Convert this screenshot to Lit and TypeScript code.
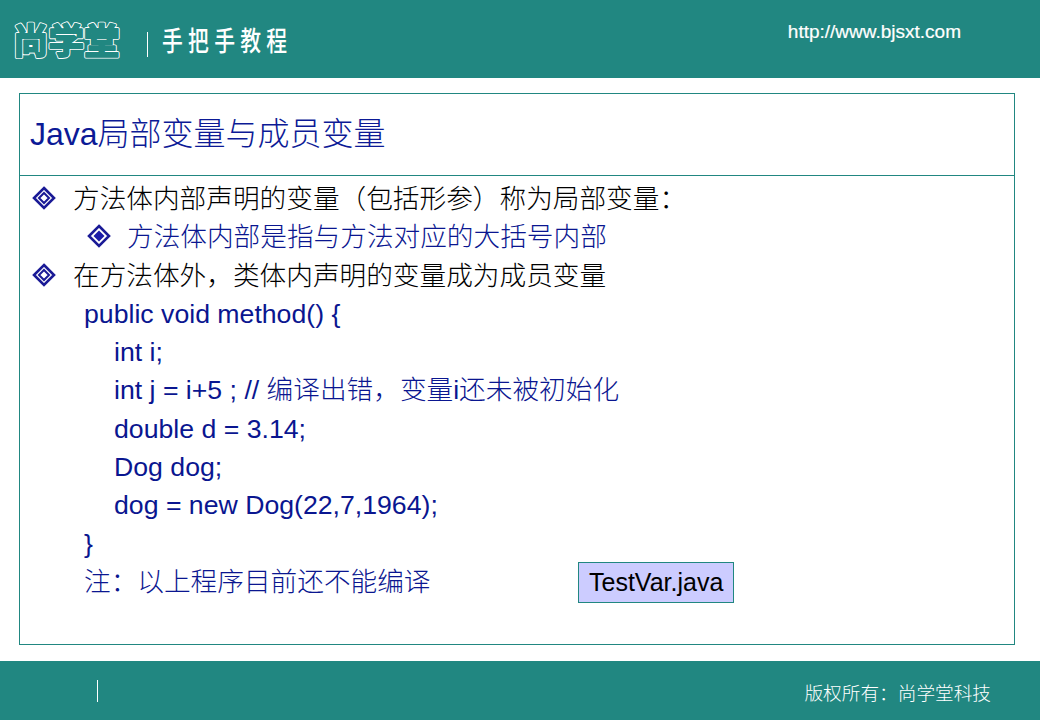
import { LitElement, html, css } from "lit";
import { customElement } from "lit/decorators.js";

const outerDiamond = html`<svg class="dia" width="24" height="24" viewBox="0 0 24 24">
  <path d="M12 2 L22 12 L12 22 L2 12 Z" fill="none" stroke="#1a1a96" stroke-width="2.6"/>
  <path d="M12 7 L17 12 L12 17 L7 12 Z" fill="none" stroke="#1a1a96" stroke-width="2"/>
</svg>`;
const innerDiamond = html`<svg class="dia" width="24" height="24" viewBox="0 0 24 24">
  <path d="M12 2 L22 12 L12 22 L2 12 Z" fill="none" stroke="#1a1a96" stroke-width="2.6"/>
  <path d="M12 6.5 L17.5 12 L12 17.5 L6.5 12 Z" fill="#1a1aa8"/>
</svg>`;

@customElement("app-root")
export class AppRoot extends LitElement {
  static styles = css`
    :host {
      display: flex;
      flex-direction: column;
      width: 1040px;
      height: 720px;
      background: #fff;
      font-family: "Liberation Sans", "Noto Sans CJK SC", sans-serif;
      font-weight: 300;
      overflow: hidden;
    }
    .top {
      height: 78px;
      flex: none;
      background: #218781;
      color: #fff;
      display: flex;
      align-items: center;
      padding: 0 79px 0 10px;
    }
    .logo {
      display: block;
      flex: none;
    }
    .logo-text {
      font-family: "Noto Sans CJK SC", sans-serif;
      font-weight: 700;
      font-size: 35.5px;
      fill: #218781;
      stroke-linejoin: round;
      stroke-linecap: round;
    }
    .halo {
      stroke: #fff;
      stroke-width: 3.8;
    }
    .core {
      stroke: #218781;
      stroke-width: 2;
    }
    .sep {
      width: 1px;
      background: #fff;
      flex: none;
    }
    .top .sep {
      height: 25px;
      margin: 11px 14px 0 21px;
    }
    .course {
      font-family: "Noto Sans CJK SC", sans-serif;
      font-size: 26px;
      font-weight: 500;
      letter-spacing: 6.6px;
      line-height: 30px;
      white-space: nowrap;
      transform: scale(0.8, 1.05);
      transform-origin: left center;
    }
    .url {
      margin-left: auto;
      align-self: flex-start;
      margin-top: 20px;
      font-size: 19px;
      line-height: 24px;
      font-weight: 400;
      -webkit-text-stroke: 0.2px #fff;
    }
    .panel {
      flex: none;
      height: 552px;
      margin: 15px 25px 16px 19px;
      border: 1px solid #218781;
      box-sizing: border-box;
      display: flex;
      flex-direction: column;
    }
    .title {
      flex: none;
      height: 82px;
      box-sizing: border-box;
      border-bottom: 1px solid #218781;
      display: flex;
      align-items: center;
      padding: 0 0 7px 10px;
      font-size: 32px;
      color: #0c1a96;
    }
    .body {
      padding-top: 4px;
      font-size: 26.67px;
      line-height: 38.3px;
      color: #000;
    }
    .row {
      display: flex;
      align-items: center;
      height: 38.3px;
      white-space: nowrap;
    }
    .dia {
      flex: none;
      margin-top: -2px;
    }
    .l1 {
      padding-left: 12px;
      gap: 17px;
    }
    .l2 {
      padding-left: 67px;
      gap: 16px;
      color: #0a1690;
    }
    .code {
      color: #0a1690;
      padding-left: 64px;
    }
    .code2 {
      color: #0a1690;
      padding-left: 94px;
    }
    .note {
      position: relative;
      color: #0a1690;
      padding-left: 64px;
    }
    .file {
      position: absolute;
      left: 558px;
      top: -1px;
      width: 156px;
      height: 41px;
      box-sizing: border-box;
      border: 1px solid #218781;
      background: #ccccff;
      color: #000;
      font-size: 25px;
      line-height: 39px;
      padding-left: 10px;
    }
    .bottom {
      flex: 1;
      background: #218781;
      color: #fff;
      display: flex;
      align-items: center;
      padding: 0 49px 0 97px;
    }
    .bottom .sep {
      height: 22px;
      margin-top: 1px;
    }
    .copy {
      margin-left: auto;
      font-family: "Noto Sans CJK SC", sans-serif;
      font-size: 18.67px;
      margin-top: 1px;
    }
  `;

  render() {
    return html`
      <header class="top">
        <svg class="logo" width="116" height="56" viewBox="0 0 116 56">
          <g class="logo-text halo"><text id="lg" x="3" y="43">尚学堂</text></g>
          <use class="logo-text core" href="#lg"></use>
        </svg>
        <div class="sep"></div>
        <div class="course">手把手教程</div>
        <div class="url">http://www.bjsxt.com</div>
      </header>
      <section class="panel">
        <div class="title"><span>Java局部变量与成员变量</span></div>
        <div class="body">
          <div class="row l1">${outerDiamond}<span>方法体内部声明的变量（包括形参）称为局部变量：</span></div>
          <div class="row l2">${innerDiamond}<span>方法体内部是指与方法对应的大括号内部</span></div>
          <div class="row l1">${outerDiamond}<span>在方法体外，类体内声明的变量成为成员变量</span></div>
          <div class="row code">public void method() {</div>
          <div class="row code2">int i;</div>
          <div class="row code2">int j = i+5 ; // 编译出错，变量i还未被初始化</div>
          <div class="row code2">double d = 3.14;</div>
          <div class="row code2">Dog dog;</div>
          <div class="row code2">dog = new Dog(22,7,1964);</div>
          <div class="row code">}</div>
          <div class="row note">注：以上程序目前还不能编译<div class="file">TestVar.java</div></div>
        </div>
      </section>
      <footer class="bottom">
        <div class="sep"></div>
        <div class="copy">版权所有：尚学堂科技</div>
      </footer>
    `;
  }
}
